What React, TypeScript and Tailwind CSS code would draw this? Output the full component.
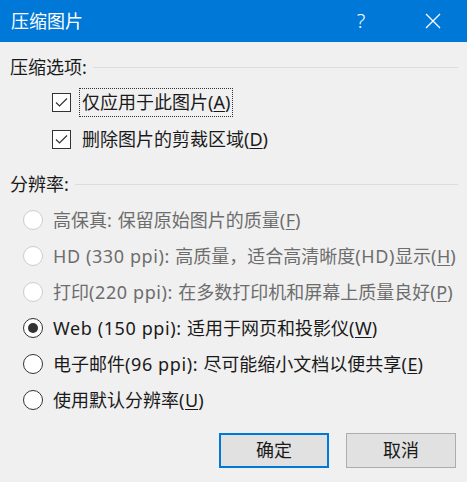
import React from "react";

const FONT = "font-['Noto_Sans','Noto_Sans_CJK_SC',sans-serif]";

type RadioItem = {
  label: string;
  key: string;
  tail: string;
  disabled?: boolean;
  checked?: boolean;
};

const radios: RadioItem[] = [
  { label: "高保真: 保留原始图片的质量(", key: "F", tail: ")", disabled: true },
  { label: "HD (330 ppi): 高质量，适合高清晰度(HD)显示(", key: "H", tail: ")", disabled: true },
  { label: "打印(220 ppi): 在多数打印机和屏幕上质量良好(", key: "P", tail: ")", disabled: true },
  { label: "Web (150 ppi): 适用于网页和投影仪(", key: "W", tail: ")", checked: true },
  { label: "电子邮件(96 ppi): 尽可能缩小文档以便共享(", key: "E", tail: ")" },
  { label: "使用默认分辨率(", key: "U", tail: ")" },
];

// latin runs are a bit narrower than the dialog font, so space them out
function Mixed({ text }: { text: string }) {
  const parts = text.match(/[\x20-\x7e]+|[^\x20-\x7e]+/g) || [];
  return (
    <>
      {parts.map((p, i) =>
        /^[\x20-\x7e]+$/.test(p) ? (
          <span key={i} className="tracking-[0.6px]">
            {p}
          </span>
        ) : (
          <span key={i}>{p}</span>
        ),
      )}
    </>
  );
}

function GroupLabel({ text }: { text: string }) {
  return (
    <div className="flex items-center h-[26px] pr-[9px]">
      <span className="text-[18px] text-[#1a1a1a] leading-none">{text}</span>
      <div className="flex-1 ml-[6px] h-px bg-[#dcdcdc]" />
    </div>
  );
}

function CheckBox() {
  return (
    <span className="w-[19px] h-[19px] border border-[#333333] bg-white flex items-center justify-center shrink-0">
      <svg width="13" height="11" viewBox="0 0 13 11">
        <polyline points="1,5.5 4.5,9 12,1.5" fill="none" stroke="#333" strokeWidth="1.2" />
      </svg>
    </span>
  );
}

function Radio({ disabled, checked }: { disabled?: boolean; checked?: boolean }) {
  return (
    <span
      className={`w-[20px] h-[20px] rounded-full border bg-white flex items-center justify-center shrink-0 ${
        disabled ? "border-[#cccccc]" : "border-[#333333]"
      }`}
    >
      {checked && <span className="w-[10px] h-[10px] rounded-full bg-[#333333]" />}
    </span>
  );
}

export default function App() {
  return (
    <div className={`w-[467px] h-[482px] bg-[#f0f0f0] ${FONT} overflow-hidden`}>
      {/* title bar */}
      <div className="h-[42px] bg-[#0078d7] flex items-center text-white">
        <span className="pl-[11px] text-[18px] leading-none flex-1">压缩图片</span>
        <span className="w-[40px] text-center text-[20px] font-light leading-none mr-[44px]">?</span>
        <span className="mr-[26px] flex items-center">
          <svg width="16" height="16" viewBox="0 0 16 16">
            <path d="M1 1L15 15M15 1L1 15" stroke="#fff" strokeWidth="1.3" />
          </svg>
        </span>
      </div>

      <div className="pl-[10px]">
        <div className="mt-[12px]">
          <GroupLabel text="压缩选项:" />
        </div>
        <div className="pl-[42px]">
          <div className="h-[37px] flex items-center mt-[4px]">
            <CheckBox />
            <span className="ml-[8px] border border-dotted border-[#333] h-[29px] px-[2px] flex items-center text-[18px] text-[#1a1a1a]">
              仅应用于此图片(<span className="underline underline-offset-2">A</span>)
            </span>
          </div>
          <div className="h-[37px] flex items-center">
            <CheckBox />
            <span className="ml-[11px] text-[18px] text-[#1a1a1a]">
              删除图片的剪裁区域(<span className="underline underline-offset-2">D</span>)
            </span>
          </div>
        </div>

        <div className="mt-[13px]">
          <GroupLabel text="分辨率:" />
        </div>
        <div className="pl-[13px] mt-[5px]">
          {radios.map((r, i) => (
            <div key={i} className="h-[36px] flex items-center">
              <Radio disabled={r.disabled} checked={r.checked} />
              <span
                className={`ml-[10px] text-[18px] whitespace-nowrap ${
                  r.disabled ? "text-[#6d6d6d]" : "text-[#1a1a1a]"
                }`}
              >
                <Mixed text={r.label} />
                <span className="underline underline-offset-2">{r.key}</span>
                {r.tail}
              </span>
            </div>
          ))}
        </div>

        <div className="mt-[15px] flex justify-end gap-[17px] pr-[11px]">
          <button className="w-[110px] h-[35px] bg-[#e1e1e1] border-2 border-[#0078d7] text-[18px] text-[#1a1a1a]">
            确定
          </button>
          <button className="w-[110px] h-[35px] bg-[#e1e1e1] border border-[#adadad] text-[18px] text-[#1a1a1a]">
            取消
          </button>
        </div>
      </div>
    </div>
  );
}
